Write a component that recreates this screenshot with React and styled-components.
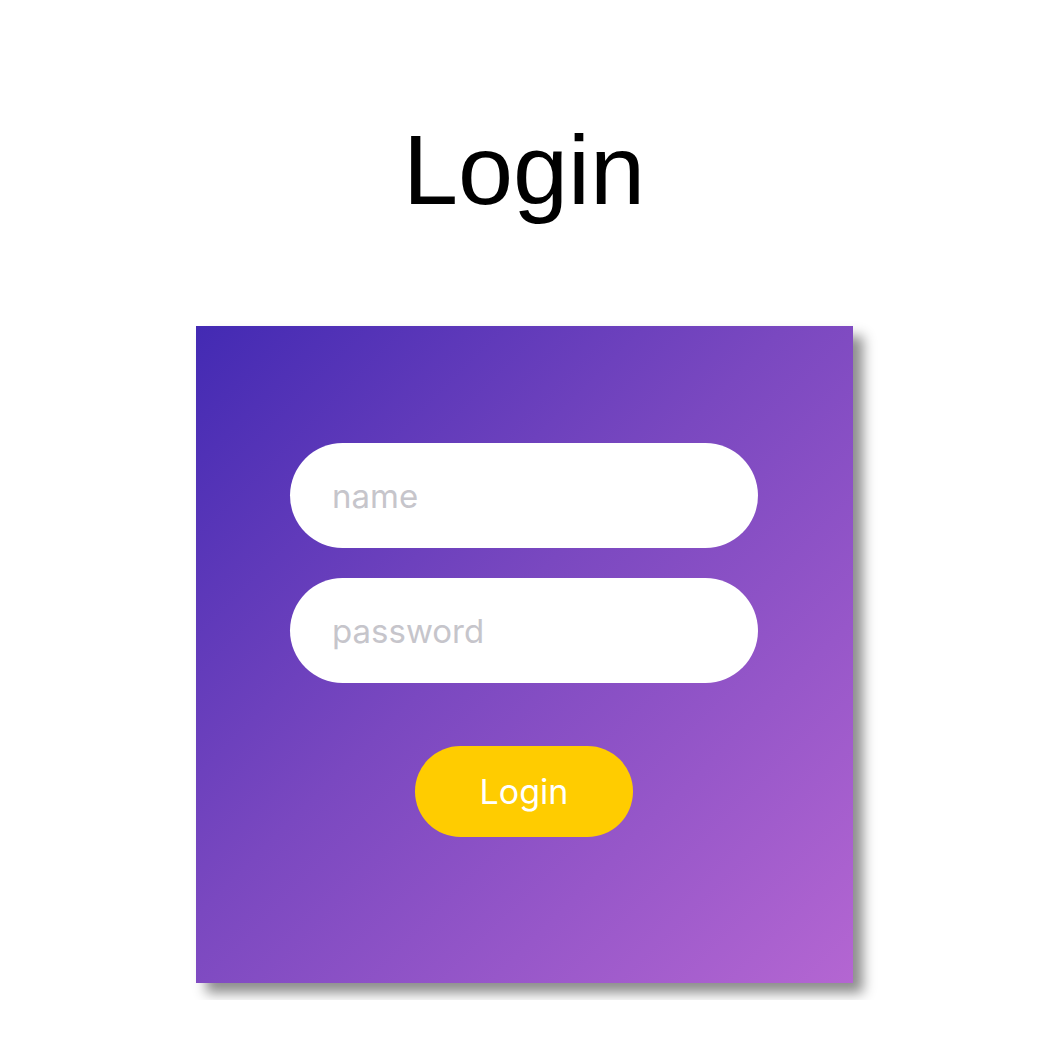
import React from 'react';
import styled, { createGlobalStyle } from 'styled-components';

const GlobalStyle = createGlobalStyle`
  html, body {
    margin: 0;
    padding: 0;
    background: #fff;
  }
`;

const Page = styled.div`
  height: 1000px;
  overflow: hidden;
  display: flex;
  flex-direction: column;
  align-items: center;
`;

const Title = styled.h1`
  margin: 112px 0 0;
  font-family: 'Liberation Sans', Arial, sans-serif;
  font-size: 99px;
  font-weight: 400;
  line-height: 115px;
  color: #000;
`;

const Card = styled.form`
  margin-top: 99px;
  width: 657px;
  height: 657px;
  box-sizing: border-box;
  padding-top: 117px;
  display: flex;
  flex-direction: column;
  align-items: center;
  gap: 30px;
  background: linear-gradient(135deg, #432ab3 0%, #7a48c0 45%, #b466d2 100%);
  box-shadow: 10px 10px 12px rgba(0, 0, 0, 0.45);
`;

const Field = styled.input`
  width: 468px;
  height: 105px;
  box-sizing: border-box;
  border: none;
  outline: none;
  border-radius: 53px;
  padding: 0 42px;
  background: #fff;
  font-family: Inter, 'Noto Sans', sans-serif;
  font-size: 33px;
  color: #333;

  &::placeholder {
    color: #c6c5cb;
  }
`;

const Submit = styled.button`
  margin-top: 33px;
  width: 218px;
  height: 91px;
  border: none;
  border-radius: 46px;
  background: #ffcc00;
  color: #fff;
  font-family: Inter, 'Noto Sans', sans-serif;
  font-size: 34px;
  cursor: pointer;
`;

export default function App() {
  return (
    <>
      <GlobalStyle />
      <Page>
        <Title>Login</Title>
        <Card onSubmit={(e) => e.preventDefault()}>
          <Field type="text" placeholder="name" />
          <Field type="password" placeholder="password" />
          <Submit type="submit">Login</Submit>
        </Card>
      </Page>
    </>
  );
}
